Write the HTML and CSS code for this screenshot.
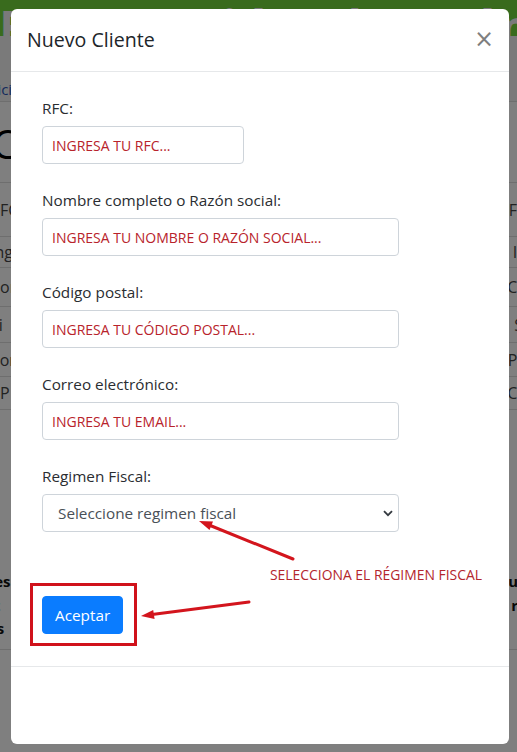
FILE: index.html
```html
<!DOCTYPE html>
<html lang="es">
<head>
<meta charset="utf-8">
<title>Nuevo Cliente</title>
<link rel="stylesheet" href="styles.css">
</head>
<body>
<div class="page">
  <header class="page-header"><span class="page-header-title">Facturación Electrónica</span></header>
  <div class="crumbs"><a class="crumb-link" href="#">Inicio</a></div>
  <h1 class="page-title">Clientes</h1>
  <div class="rows">
    <div class="row r1"><span class="cell">RFC</span><span class="cell">RFC</span></div>
    <div class="row r2"><span class="cell">Ingresa</span><span class="cell">In</span></div>
    <div class="row r3"><span class="cell">Como</span><span class="cell">Co</span></div>
    <div class="row r4"><span class="cell cut">Si</span><span class="cell">Si</span></div>
    <div class="row r5"><span class="cell">Por</span><span class="cell">Po</span></div>
    <div class="row r6"><span class="cell">CP</span><span class="cell">CP</span></div>
  </div>
  <div class="notes">
    <div class="note"><b class="cell">Pres</b><b class="cell">u</b></div>
    <div class="note"><b class="cell">Est</b><b class="cell">r</b></div>
    <div class="note"><b class="cell">Res</b><b class="cell"> </b></div>
  </div>
</div>

<div class="backdrop"></div>

<div class="modal">
  <div class="modal-header">
    <h5 class="modal-title">Nuevo Cliente</h5>
    <button class="close" type="button" aria-label="Cerrar">×</button>
  </div>
  <div class="modal-body">
    <form class="form">
      <div class="group">
        <label class="label" for="rfc">RFC:</label>
        <input class="input input-short" id="rfc" type="text" placeholder="INGRESA TU RFC...">
      </div>
      <div class="group">
        <label class="label" for="nombre">Nombre completo o Razón social:</label>
        <input class="input" id="nombre" type="text" placeholder="INGRESA TU NOMBRE O RAZÓN SOCIAL...">
      </div>
      <div class="group">
        <label class="label" for="cp">Código postal:</label>
        <input class="input" id="cp" type="text" placeholder="INGRESA TU CÓDIGO POSTAL...">
      </div>
      <div class="group">
        <label class="label" for="email">Correo electrónico:</label>
        <input class="input" id="email" type="text" placeholder="INGRESA TU EMAIL...">
      </div>
      <div class="group group-last">
        <label class="label" for="regimen">Regimen Fiscal:</label>
        <div class="select-wrap">
          <select class="select" id="regimen">
            <option>Seleccione regimen fiscal</option>
          </select>
          <svg class="chevron" width="10" height="7" viewBox="0 0 10 7"><path d="M1 1.2 L5 5.2 L9 1.2" fill="none" stroke="#343a40" stroke-width="1.8"/></svg>
        </div>
      </div>
      <div class="hint">SELECCIONA EL RÉGIMEN FISCAL</div>
      <div class="highlight">
        <button class="btn" type="button">Aceptar</button>
      </div>
    </form>
  </div>
  <div class="modal-footer"></div>
</div>

<svg class="arrows" width="517" height="752" viewBox="0 0 517 752">
  <line x1="293" y1="559" x2="209" y2="525" stroke="#d3151d" stroke-width="3" stroke-linecap="round"/>
  <polygon points="199,521 213,521.5 209.5,530" fill="#d3151d"/>
  <line x1="249" y1="602" x2="152" y2="614.6" stroke="#d3151d" stroke-width="3" stroke-linecap="round"/>
  <polygon points="141,616 154.6,619 153.2,610" fill="#d3151d"/>
</svg>
</body>
</html>
```

FILE: styles.css
```css
* { box-sizing: border-box; }

body {
  margin: 0;
  width: 517px;
  height: 752px;
  overflow: hidden;
  position: relative;
  background: #fff;
  font-family: "Open Sans", "Noto Sans", "Liberation Sans", sans-serif;
  color: #212529;
}

/* ---------- page behind the modal ---------- */
.page {
  width: 517px;
  height: 752px;
}
.page-header {
  height: 36px;
  background: #72d63a;
  overflow: hidden;
  display: flex;
  justify-content: center;
}
.page-header-title {
  font-size: 46px;
  font-weight: 700;
  color: #f4f4f4;
  line-height: 1;
  white-space: nowrap;
  letter-spacing: 3px;
  margin-top: 3px;
  padding-left: 90px;
}
.crumbs {
  height: 66px;
  padding-top: 44px;
  background: #f4f4f4;
  border-bottom: 1px solid #ddd;
  font-size: 15px;
  line-height: 18px;
  padding-left: 0;
}
.crumb-link { color: #2a55b8; text-decoration: none; margin-left: -16px; }
.page-title {
  margin: 0;
  height: 81px;
  padding-top: 18px;
  font-size: 40px;
  font-weight: 400;
  line-height: 48px;
  margin-left: -8px;
  color: #000;
  border-bottom: 1px solid #ddd;
}
.rows { display: flex; flex-direction: column; }
.row {
  display: flex;
  justify-content: space-between;
  align-items: center;
  border-bottom: 1px solid #ddd;
  font-size: 16px;
  color: #444;
  white-space: nowrap;
  overflow: hidden;
}
.row .cell:first-child { margin-left: -10px; }
.row .cell:last-child { margin-right: -10px; }
.r1 { height: 54px; }
.r2 { height: 31px; }
.r3 { height: 39px; }
.r4 { height: 36px; }
.r5 { height: 34px; }
.r6 { height: 33px; }
.notes {
  margin-top: 160px;
  padding-bottom: 8px;
  border-bottom: 1px solid #ddd;
}
.note {
  display: flex;
  justify-content: space-between;
  font-size: 15px;
  line-height: 23.5px;
  color: #111;
  white-space: nowrap;
}
.note .cell:first-child { margin-left: -22px; }
.note .cell:last-child { margin-right: -1px; }

.backdrop {
  position: absolute;
  inset: 0;
  background: rgba(0, 0, 0, 0.5);
}

/* ---------- modal ---------- */
.modal {
  position: absolute;
  left: 11px;
  top: 9px;
  width: 498px;
  background: #fff;
  border-radius: 6px;
  display: flex;
  flex-direction: column;
}
.modal-header {
  height: 63px;
  padding: 16px;
  display: flex;
  align-items: center;
  justify-content: space-between;
  border-bottom: 1px solid #e6e8ea;
}
.modal-title {
  margin: 0;
  font-size: 19.6px;
  font-weight: 500;
  line-height: 30px;
  color: #212529;
}
.close {
  border: 0;
  background: none;
  padding: 0 0 2px 0;
  margin-right: -1px;
  font-family: "DejaVu Sans", "Liberation Sans", sans-serif;
  font-size: 24px;
  font-weight: 400;
  line-height: 1;
  color: #000;
  opacity: 0.5;
}
.modal-body {
  padding: 24px 16px 20px;
}
.form {
  padding: 0 15px;
  display: flex;
  flex-direction: column;
}
.group {
  display: flex;
  flex-direction: column;
  margin-bottom: 24px;
}
.group-last { margin-bottom: 0; }
.label {
  font-size: 15.3px;
  line-height: 24px;
  margin-bottom: 6px;
  color: #2a2d31;
}
.input {
  width: 357px;
  height: 38px;
  padding: 0 9px;
  border: 1px solid #ced4da;
  border-radius: 4px;
  font-family: inherit;
  font-size: 14px;
  color: #b8232b;
  background: #fff;
}
.input::placeholder {
  color: #b8232b;
  opacity: 1;
}
.input-short { width: 202px; }
.select-wrap {
  position: relative;
  width: 357px;
}
.select {
  width: 357px;
  height: 38px;
  padding: 0 30px 0 15px;
  border: 1px solid #ced4da;
  border-radius: 4px;
  background: #fff;
  font-family: inherit;
  font-size: 15.3px;
  color: #495057;
  appearance: none;
  -webkit-appearance: none;
}
.chevron {
  position: absolute;
  right: 6px;
  top: 16px;
  pointer-events: none;
}
.hint {
  margin-top: 35px;
  padding-left: 228px;
  font-size: 13.9px;
  line-height: 16px;
  color: #b3262d;
  white-space: nowrap;
}
.highlight {
  align-self: flex-start;
  margin-left: -12px;
  padding: 10px 11px 9px 9px;
  border: 3px solid #d0121b;
}
.btn {
  display: block;
  height: 38px;
  padding: 0 12px;
  border: 1px solid #0a7cff;
  border-radius: 4px;
  background: #0a7cff;
  color: #fff;
  font-family: inherit;
  font-size: 15.3px;
  line-height: 36px;
}
.modal-footer {
  height: 78px;
  border-top: 1px solid #e6e8ea;
}

.arrows {
  position: absolute;
  left: 0;
  top: 0;
  pointer-events: none;
}
```
